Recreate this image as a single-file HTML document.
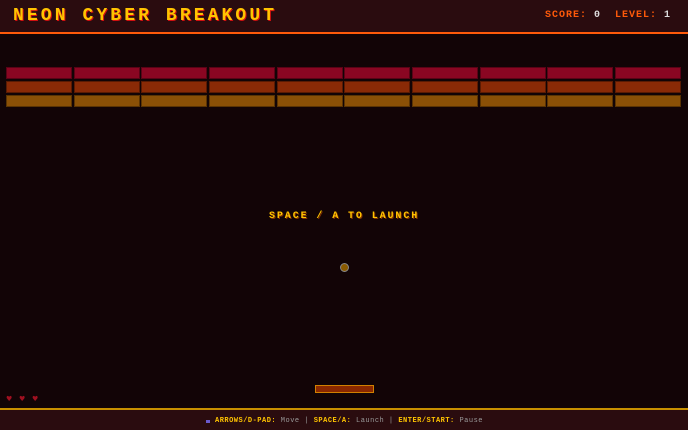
<!DOCTYPE html>
<html><head><style>
*{margin:0;padding:0;box-sizing:border-box}
body{width:688px;height:430px;background:#120406;position:relative;overflow:hidden;font-family:"Liberation Mono",monospace;font-weight:bold}
#hdr{position:absolute;left:0;top:0;width:688px;height:34px;background:#2a0c0f;border-bottom:2px solid #ff5a0a}
#title{position:absolute;left:13px;top:6px;font-size:18px;letter-spacing:3.1px;color:#ffc400;text-shadow:1px 1px 0 #d01010;line-height:20px}
#score{position:absolute;left:545px;top:10px;font-size:10px;letter-spacing:1px;color:#ff5a0a;line-height:12px;white-space:pre}
#score span{color:#ddd}
.b{position:absolute;height:12px;width:66px;border:1px solid rgba(0,0,0,.35)}
#launch{position:absolute;left:269px;top:211px;font-size:10px;letter-spacing:1.9px;color:#ffc400;line-height:12px;text-shadow:1px 1px 0 #803000}
#ball{position:absolute;left:340px;top:263px;width:9px;height:9px;border-radius:50%;background:#8a5a00;border:1px solid #888}
#pad{position:absolute;left:315px;top:385px;width:59px;height:8px;background:#8a2800;border:1px solid #d08000}
.h{position:absolute;top:395px;color:#a01020;font-size:7px;font-family:"DejaVu Sans",sans-serif}
#ftr{position:absolute;left:0;top:408px;width:688px;height:22px;background:#2a0c0f;border-top:2px solid #c89000}
#ft{position:absolute;left:215px;top:7px;font-size:7px;letter-spacing:0.5px;color:#999;line-height:9px;white-space:pre;font-weight:normal}
#ft b{color:#ffc400}
</style></head><body>
<div id="hdr"><div id="title">NEON CYBER BREAKOUT</div><div id="score">SCORE: <span>0</span>  LEVEL: <span>1</span></div></div>
<div id="bricks"></div>
<div id="launch">SPACE / A TO LAUNCH</div>
<div id="ball"></div>
<div id="pad"></div>
<div class="h" style="left:6px">♥</div><div class="h" style="left:19px">♥</div><div class="h" style="left:32px">♥</div>
<div id="ftr"><div style="position:absolute;left:206px;top:10px;width:4px;height:3px;background:#6a5acd"></div><div id="ft"><b>ARROWS/D-PAD:</b> Move | <b>SPACE/A:</b> Launch | <b>ENTER/START:</b> Pause</div></div>
<script>
var c=['#8a0622','#8a2a06','#8a5006'],t=[67,81,95],h='';
for(var r=0;r<3;r++)for(var i=0;i<10;i++)h+='<div class="b" style="left:'+Math.round(6+i*67.67)+'px;top:'+t[r]+'px;background:'+c[r]+'"></div>';
document.getElementById('bricks').innerHTML=h;
</script>
</body></html>
